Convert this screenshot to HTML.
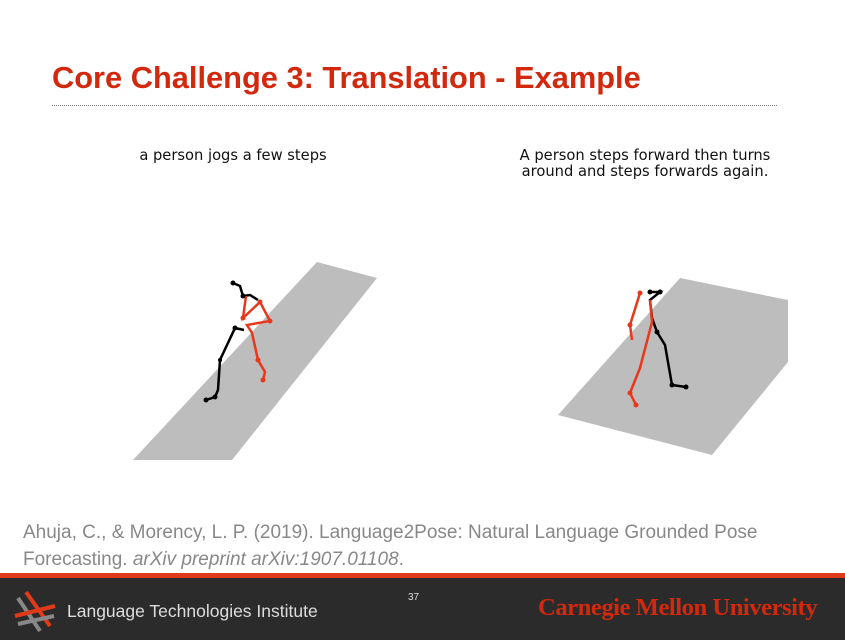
<!DOCTYPE html><html><head><style>
body{margin:0;width:845px;height:640px;overflow:hidden;background:#fff;font-family:"Liberation Sans",sans-serif;position:relative}
.t{position:absolute;left:52px;top:60px;font-size:30.8px;font-weight:bold;color:#d2290e}
.hr{position:absolute;left:52px;top:105px;width:725px;border-top:1px dotted #777}
.c{position:absolute;font-family:"DejaVu Sans",sans-serif;font-size:14.7px;color:#111;text-align:center;line-height:16px}
.ref{position:absolute;left:23px;top:519px;font-size:19px;color:#888;line-height:27px}
.foot{position:absolute;left:0;top:578px;width:845px;height:62px;background:#2b2b2b}
.red{position:absolute;left:0;top:573px;width:845px;height:5px;background:#e03a1a}
</style></head><body>
<div class="t">Core Challenge 3: Translation - Example</div>
<div class="hr"></div>
<div class="c" style="left:93px;top:148px;width:280px">a person jogs a few steps</div>
<div class="c" style="left:470px;top:148px;width:350px">A person steps forward then turns<br>around and steps forwards again.</div>
<svg style="position:absolute;left:0;top:0" width="845" height="640">
<polygon points="317,262 377,278 232,460 133,460" fill="#bdbdbd"/>
<polygon points="680,278 788,300 788,362 712,455 558,415" fill="#bdbdbd"/>
<g fill="none" stroke-width="2.5">
<polyline points="233,283 240,286 243,296 250,295 258,300" stroke="#000"/>
<polyline points="206,400 215,397 218,390 220,360 235,328 244,330" stroke="#000"/>
<polyline points="246,296 243,318 260,302 270,321 247,325 252,333 258,360 265,372 263,380" stroke="#e8371a"/>
<polyline points="650,292 660,292 650,300 652,318 657,332 665,345 672,385 686,387" stroke="#000"/>
<polyline points="640,293 630,325 632,340" stroke="#e8371a"/>
<polyline points="650,300 652,322 646,345 640,368 630,393 636,405" stroke="#e8371a"/>
</g>
<g fill="#000"><circle cx="233" cy="283" r="2.5"/><circle cx="243" cy="296" r="2.5"/><circle cx="235" cy="328" r="2.5"/><circle cx="220" cy="360" r="2"/><circle cx="215" cy="397" r="2.5"/><circle cx="206" cy="400" r="2.5"/><circle cx="660" cy="292" r="2.5"/><circle cx="650" cy="292" r="2.5"/><circle cx="657" cy="332" r="2.5"/><circle cx="672" cy="385" r="2.5"/><circle cx="686" cy="387" r="2.5"/></g>
<g fill="#e8371a"><circle cx="260" cy="302" r="2.5"/><circle cx="270" cy="321" r="2.5"/><circle cx="243" cy="318" r="2.5"/><circle cx="258" cy="360" r="2.5"/><circle cx="263" cy="380" r="2.5"/><circle cx="640" cy="293" r="2.5"/><circle cx="630" cy="325" r="2.5"/><circle cx="630" cy="393" r="2.5"/><circle cx="636" cy="405" r="2.5"/></g>
</svg>
<div class="ref">Ahuja, C., &amp; Morency, L. P. (2019). Language2Pose: Natural Language Grounded Pose<br>Forecasting. <i>arXiv preprint arXiv:1907.01108</i>.</div>
<div class="red"></div>
<div class="foot">
<svg style="position:absolute;left:10px;top:8px" width="50" height="50"><g stroke-width="4"><line x1="8" y1="12" x2="30" y2="45" stroke="#888"/><line x1="16" y1="6" x2="40" y2="40" stroke="#e03a1a"/><line x1="5" y1="30" x2="45" y2="20" stroke="#e03a1a"/><line x1="8" y1="38" x2="44" y2="30" stroke="#888"/></g></svg>
<div style="position:absolute;left:67px;top:23px;font-size:17.5px;color:#ddd">Language Technologies Institute</div>
<div style="position:absolute;left:408px;top:14px;font-size:10px;color:#ddd">37</div>
<div style="position:absolute;left:538px;top:16px;font-size:24.7px;font-weight:bold;color:#d2290e;font-family:'Liberation Serif',serif;letter-spacing:-0.5px">Carnegie Mellon University</div>
</div>
</body></html>
